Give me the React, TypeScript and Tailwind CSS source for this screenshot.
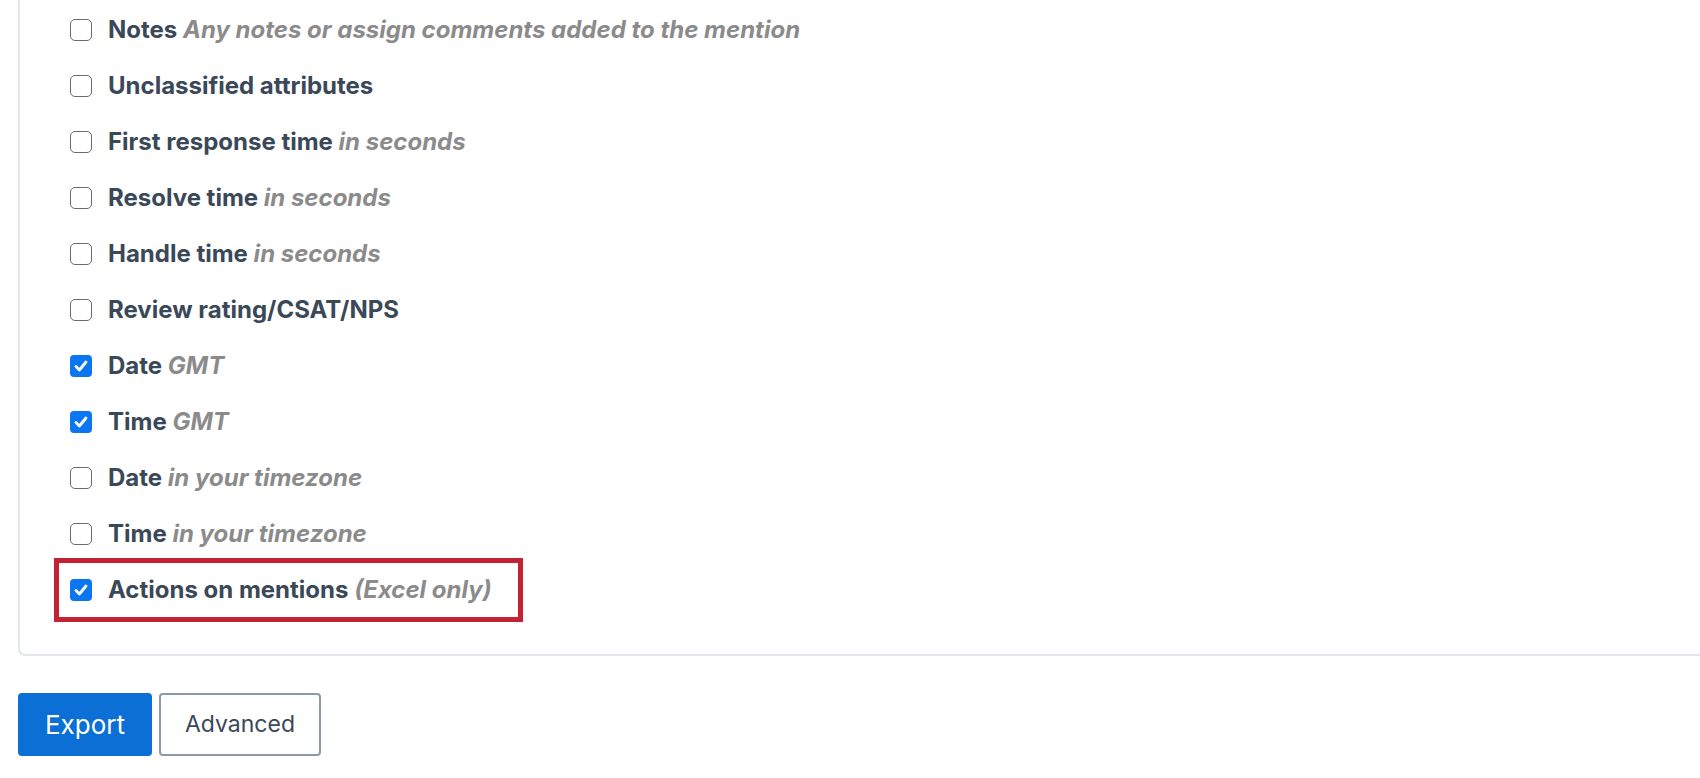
import React from "react";

type Row = { label: string; hint?: string; checked?: boolean; highlight?: boolean };

const rows: Row[] = [
  { label: "Notes", hint: "Any notes or assign comments added to the mention" },
  { label: "Unclassified attributes" },
  { label: "First response time", hint: "in seconds" },
  { label: "Resolve time", hint: "in seconds" },
  { label: "Handle time", hint: "in seconds" },
  { label: "Review rating/CSAT/NPS" },
  { label: "Date", hint: "GMT", checked: true },
  { label: "Time", hint: "GMT", checked: true },
  { label: "Date", hint: "in your timezone" },
  { label: "Time", hint: "in your timezone" },
  { label: "Actions on mentions", hint: "(Excel only)", checked: true, highlight: true },
];

function Box({ checked }: { checked?: boolean }) {
  if (checked) {
    return (
      <span className="flex h-[22px] w-[22px] shrink-0 items-center justify-center rounded-[4px] bg-[#0b76f2]">
        <svg width="16" height="16" viewBox="0 0 16 16" fill="none">
          <path d="M3 8.6 L6.4 12 L13 4" stroke="white" strokeWidth="2.8" strokeLinecap="round" strokeLinejoin="round" />
        </svg>
      </span>
    );
  }
  return <span className="h-[22px] w-[22px] shrink-0 rounded-[5px] border-[1.5px] border-[#676c72] bg-white" />;
}

function Label({ r }: { r: Row }) {
  return (
    <div className="flex items-center gap-[16px]">
      <Box checked={r.checked} />
      <span className="whitespace-nowrap text-[24px] leading-none">
        <span className="font-bold text-[#3a4858]">{r.label}</span>
        {r.hint && <span className="font-bold italic text-[#8b8b8b]"> {r.hint}</span>}
      </span>
    </div>
  );
}

export default function App() {
  return (
    <div className="h-[778px] w-[1700px] overflow-hidden bg-white" style={{ fontFamily: "Inter, 'Noto Sans', sans-serif" }}>
      <div className="ml-[18px] rounded-bl-[7px] border-b-2 border-l-2 border-[#e3e6ea] pb-[36px] pl-[50px] pt-[2px]">
        {rows.map((r, i) => (
          <div key={i} className="flex h-[56px] items-center">
            {r.highlight ? (
              <div className="-ml-[16px] border-[5px] border-[#c42232] py-[15px] pl-[11px] pr-[26px]">
                <Label r={r} />
              </div>
            ) : (
              <Label r={r} />
            )}
          </div>
        ))}
      </div>
      <div className="ml-[18px] mt-[37px] flex gap-[7px]">
        <button className="flex h-[63px] w-[134px] items-center justify-center rounded-[4px] bg-[#0b6fd6] text-[26px] text-white">
          Export
        </button>
        <button className="flex h-[63px] w-[162px] items-center justify-center rounded-[4px] border-2 border-[#8c99a6] bg-white text-[23px] text-[#3a4858]">
          Advanced
        </button>
      </div>
    </div>
  );
}
